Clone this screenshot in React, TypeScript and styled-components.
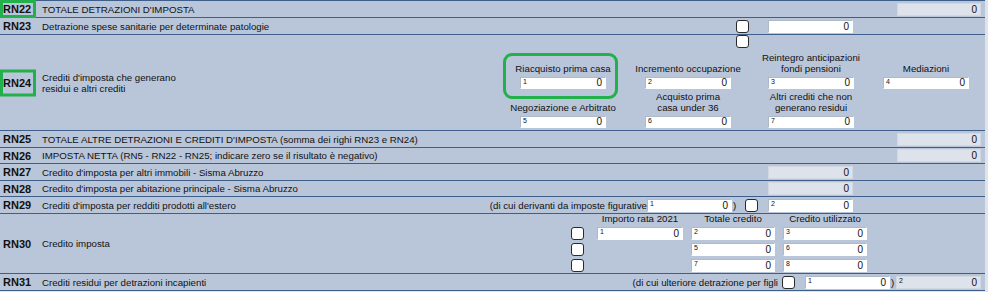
import React from 'react';
import styled, { createGlobalStyle, css } from 'styled-components';

const GlobalStyle = createGlobalStyle`
  html, body {
    margin: 0;
    padding: 0;
    background: #dfe4ec;
  }
  body {
    font-family: "Liberation Sans", Arial, sans-serif;
    color: #111;
  }
`;

const LINE = '#3f5f8b';
const GREEN = '#22b04b';

const Sheet = styled.div`
  width: 985px;
  background: #b9c5d9;
  border-top: 1px solid ${LINE};
  font-size: 9.7px;
`;

const Row = styled.div<{ $h: number }>`
  display: flex;
  align-items: center;
  height: ${p => p.$h}px;
  box-sizing: border-box;
  border-bottom: 1px solid ${LINE};
  padding-right: 4px;
`;

const Code = styled.div<{ $mark?: number }>`
  position: relative;
  flex: 0 0 42px;
  align-self: stretch;
  display: flex;
  align-items: center;
  box-sizing: border-box;
  padding-left: 3px;
  font-weight: bold;
  font-size: 11px;
  ${p => p.$mark && css`
    &::after {
      content: '';
      position: absolute;
      left: 0;
      top: 50%;
      width: 36px;
      height: ${p.$mark}px;
      transform: translateY(-50%);
      box-sizing: border-box;
      border: 3px solid ${GREEN};
    }
  `}
`;

const Desc = styled.div`
  flex: 1;
  line-height: 11px;
`;

const Note = styled.div`
  flex: none;
  white-space: nowrap;
`;

const Gap = css<{ $ml?: number; $mr?: number }>`
  margin-left: ${p => p.$ml ?? 0}px;
  margin-right: ${p => p.$mr ?? 0}px;
`;

const Box = styled.div<{ $w: number; $h?: number; $ro?: boolean; $ml?: number; $mr?: number }>`
  ${Gap};
  flex: none;
  display: flex;
  justify-content: space-between;
  box-sizing: border-box;
  width: ${p => p.$w}px;
  height: ${p => p.$h ?? 13}px;
  padding: 0 3px 0 2px;
  background: ${p => (p.$ro ? '#dde2eb' : '#ffffff')};
  border: 1px solid ${p => (p.$ro ? '#d2d8e2' : '#aeb9c9')};
  border-right-color: ${p => (p.$ro ? '#d2d8e2' : '#ffffff')};
  border-bottom-color: ${p => (p.$ro ? '#d2d8e2' : '#ffffff')};
`;

const Idx = styled.span`
  align-self: flex-start;
  font-size: 7px;
  line-height: 7px;
`;

const Val = styled.span`
  align-self: flex-end;
  font-size: 10px;
  line-height: 11px;
`;

const Check = styled.div<{ $ml?: number; $mr?: number }>`
  ${Gap};
  flex: none;
  width: 13px;
  height: 13px;
  box-sizing: border-box;
  border: 1px solid #2a2a2a;
  border-radius: 3px;
  background: #fff;
`;

const Paren = styled.span<{ $w: number }>`
  flex: none;
  width: ${p => p.$w}px;
  padding-left: 1px;
  box-sizing: border-box;
`;

/* RN24 */
const CreditPanel = styled.div`
  flex: 0 0 480px;
  align-self: stretch;
  display: flex;
  flex-direction: column;
`;

const FieldRow = styled.div<{ $mt: number }>`
  display: flex;
  margin-top: ${p => p.$mt}px;
`;

const Field = styled.div<{ $w: number; $mark?: boolean }>`
  position: relative;
  width: ${p => p.$w}px;
  display: flex;
  flex-direction: column;
  align-items: center;
  ${p => p.$mark && css`
    &::after {
      content: '';
      position: absolute;
      left: 2px;
      top: 1px;
      width: 115px;
      height: 46px;
      box-sizing: border-box;
      border: 3px solid ${GREEN};
      border-radius: 9px;
    }
  `}
`;

const FieldLabel = styled.div`
  height: 22px;
  display: flex;
  flex-direction: column;
  justify-content: flex-end;
  text-align: center;
  line-height: 11px;
  margin-bottom: 3px;
  white-space: nowrap;
`;

/* RN30 */
const RateGrid = styled.div`
  align-self: flex-start;
  margin-right: 114px;
  display: grid;
  grid-template-columns: 18px 86px 84px 84px;
  grid-template-rows: 10px 13px 13px 13px;
  column-gap: 8px;
  row-gap: 3px;
`;

const ColHead = styled.div<{ $col: number }>`
  grid-column: ${p => p.$col};
  grid-row: 1;
  text-align: center;
  line-height: 10px;
  white-space: nowrap;
`;

const Cell = styled.div<{ $col: number; $row: number }>`
  grid-column: ${p => p.$col};
  grid-row: ${p => p.$row};
  display: flex;
`;

type In = { idx?: string; w?: number; h?: number; ro?: boolean; ml?: number; mr?: number };

const Input = ({ idx, w = 85, h, ro, ml, mr }: In) => (
  <Box $w={w} $h={h} $ro={ro} $ml={ml} $mr={mr}>
    <Idx>{idx}</Idx>
    <Val>0</Val>
  </Box>
);

const topFields = [
  { w: 124, idx: '1', label: ['Riacquisto prima casa'], mark: true },
  { w: 126, idx: '2', label: ['Incremento occupazione'] },
  { w: 120, idx: '3', label: ['Reintegro anticipazioni', 'fondi pensioni'] },
  { w: 110, idx: '4', label: ['Mediazioni'] },
];

const bottomFields = [
  { w: 124, idx: '5', label: ['Negoziazione e Arbitrato'] },
  { w: 126, idx: '6', label: ['Acquisto prima', 'casa under 36'] },
  { w: 120, idx: '7', label: ['Altri crediti che non', 'generano residui'] },
];

type F = { w: number; idx: string; label: string[]; mark?: boolean };

const Fields = ({ list, mt }: { list: F[]; mt: number }) => (
  <FieldRow $mt={mt}>
    {list.map(f => (
      <Field key={f.idx} $w={f.w} $mark={f.mark}>
        <FieldLabel>
          {f.label.map(l => (
            <div key={l}>{l}</div>
          ))}
        </FieldLabel>
        <Input idx={f.idx} w={86} h={12} />
      </Field>
    ))}
  </FieldRow>
);

const App = () => (
  <>
    <GlobalStyle />
    <Sheet>
      <Row $h={17}>
        <Code $mark={18}>RN22</Code>
        <Desc>TOTALE DETRAZIONI D'IMPOSTA</Desc>
        <Input w={84} ro />
      </Row>

      <Row $h={17}>
        <Code>RN23</Code>
        <Desc>Detrazione spese sanitarie per determinate patologie</Desc>
        <Check />
        <Input ml={19} mr={128} />
      </Row>

      <Row $h={96}>
        <Code $mark={27}>RN24</Code>
        <Desc>
          Crediti d'imposta che generano
          <br />
          residui e altri crediti
        </Desc>
        <CreditPanel>
          <Check $ml={235} />
          <Fields list={topFields} mt={4} />
          <Fields list={bottomFields} mt={2} />
        </CreditPanel>
      </Row>

      <Row $h={17}>
        <Code>RN25</Code>
        <Desc>TOTALE ALTRE DETRAZIONI E CREDITI D'IMPOSTA (somma dei righi RN23 e RN24)</Desc>
        <Input w={84} ro />
      </Row>

      <Row $h={16}>
        <Code>RN26</Code>
        <Desc>IMPOSTA NETTA (RN5 - RN22 - RN25; indicare zero se il risultato è negativo)</Desc>
        <Input w={84} ro />
      </Row>

      <Row $h={17}>
        <Code>RN27</Code>
        <Desc>Credito d'imposta per altri immobili - Sisma Abruzzo</Desc>
        <Input ro mr={128} />
      </Row>

      <Row $h={16}>
        <Code>RN28</Code>
        <Desc>Credito d'imposta per abitazione principale - Sisma Abruzzo</Desc>
        <Input ro mr={128} />
      </Row>

      <Row $h={17}>
        <Code>RN29</Code>
        <Desc>Crediti d'imposta per redditi prodotti all'estero</Desc>
        <Note>(di cui derivanti da imposte figurative</Note>
        <Input idx="1" />
        <Paren $w={13}>)</Paren>
        <Check />
        <Input idx="2" ml={10} mr={128} />
      </Row>

      <Row $h={60}>
        <Code>RN30</Code>
        <Desc>Credito imposta</Desc>
        <RateGrid>
          <ColHead $col={2}>Importo rata 2021</ColHead>
          <ColHead $col={3}>Totale credito</ColHead>
          <ColHead $col={4}>Credito utilizzato</ColHead>
          {[2, 3, 4].map(r => (
            <Cell key={`c${r}`} $col={1} $row={r}>
              <Check />
            </Cell>
          ))}
          <Cell $col={2} $row={2}>
            <Input idx="1" w={86} />
          </Cell>
          {[
            ['2', '3'],
            ['5', '6'],
            ['7', '8'],
          ].map(([a, b], i) => (
            <React.Fragment key={a}>
              <Cell $col={3} $row={i + 2}>
                <Input idx={a} w={84} />
              </Cell>
              <Cell $col={4} $row={i + 2}>
                <Input idx={b} w={84} />
              </Cell>
            </React.Fragment>
          ))}
        </RateGrid>
      </Row>

      <Row $h={17}>
        <Code>RN31</Code>
        <Desc>Crediti residui per detrazioni incapienti</Desc>
        <Note>(di cui ulteriore detrazione per figli</Note>
        <Check $ml={4} />
        <Input idx="1" ml={10} />
        <Paren $w={6}>)</Paren>
        <Input idx="2" ro />
      </Row>
    </Sheet>
  </>
);

export default App;
